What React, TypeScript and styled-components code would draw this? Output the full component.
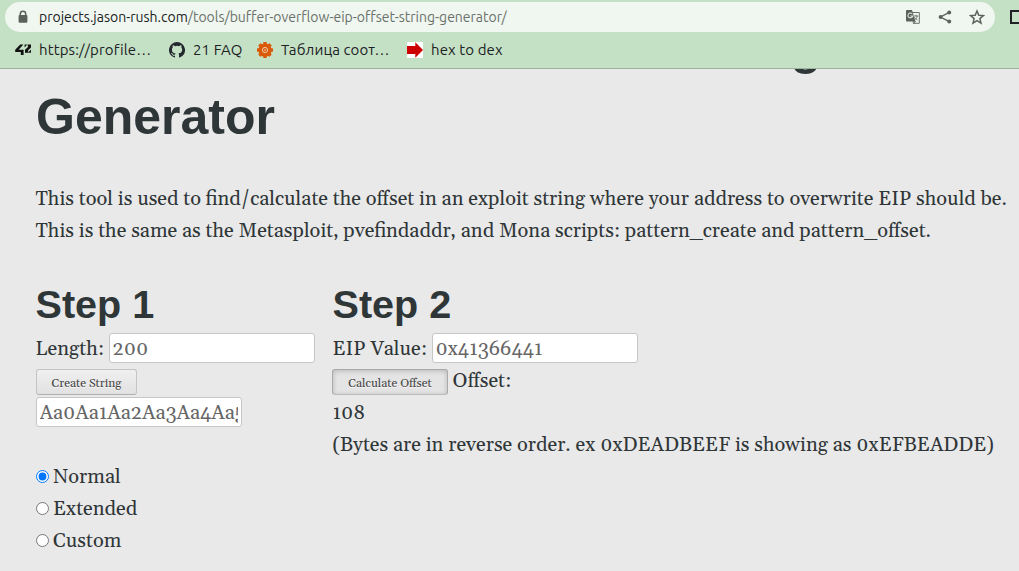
import React from "react";
import styled, { createGlobalStyle } from "styled-components";

const GlobalStyle = createGlobalStyle`
  * { box-sizing: border-box; }
  body { margin: 0; background: #e9e9e9; overflow: hidden; }
`;

const Window = styled.div`
  display: flex;
  flex-direction: column;
  width: 1019px;
  height: 571px;
  overflow: hidden;
  background: #e9e9e9;
`;

const Toolbar = styled.header`
  flex: none;
  height: 69px;
  padding-top: 2px;
  background: #c5e1c5;
  border-bottom: 1px solid #9db59d;
  font-family: Ubuntu, "Noto Sans", sans-serif;
  color: #202124;
`;

const AddressRow = styled.div`
  display: flex;
  align-items: center;
  width: 1030px;
  padding-left: 5px;
`;

const AddressBar = styled.div`
  display: flex;
  align-items: center;
  width: 990px;
  height: 30px;
  padding: 0 10px 0 12px;
  border-radius: 15px;
  background: #f0f7f0;
`;

const Url = styled.div`
  flex: 1;
  margin-left: 10px;
  font-size: 14px;
  white-space: nowrap;
  color: #6a716b;
  span { color: #202124; }
`;

const Actions = styled.div`
  display: flex;
  align-items: center;
  gap: 16px;
  svg { display: block; }
`;

const SidePanelIcon = styled.div`
  width: 16px;
  height: 14px;
  margin-left: 15px;
  border: 2px solid #202124;
`;

const Bookmarks = styled.nav`
  display: flex;
  align-items: center;
  height: 35px;
  padding-left: 15px;
`;

const Bookmark = styled.div<{ $width: number }>`
  display: flex;
  flex: none;
  align-items: center;
  gap: 8px;
  width: ${(p) => p.$width}px;
  font-size: 15px;
  letter-spacing: 0.1px;
  white-space: nowrap;
  svg { flex: none; }
`;

const Page = styled.main`
  flex: 1;
  min-height: 0;
  overflow: hidden;
  padding-left: 36px;
  font: 20px/32px Georgia, Gelasio, "Liberation Serif", serif;
  color: #2f3638;
`;

const Title = styled.h1`
  width: 900px;
  margin: -57px 0 30px;
  font: bold 50px/70px "Liberation Sans", Arial, sans-serif;
  color: #2f3638;
`;

const Line = styled.div`
  display: flex;
  align-items: center;
  height: 32px;
  padding-top: 2px;
  text-indent: -0.5px;
  white-space: nowrap;
`;

const Steps = styled.div`
  display: grid;
  grid-template-columns: 297px 1fr;
  margin-top: 34px;
`;

const StepTitle = styled.h2`
  margin: 0 0 4px;
  font: bold 39.6px/48px "Liberation Sans", Arial, sans-serif;
  text-indent: -0.5px;
`;

const Field = styled.input`
  width: 206px;
  height: 30px;
  margin-top: -2px;
  padding: 1px 3px 0 2.5px;
  border: 1px solid #c6c6c6;
  border-radius: 3px;
  outline: none;
  background: #fff;
  font: inherit;
  color: #666;
`;

const Labelled = styled.label<{ $label: number }>`
  display: grid;
  grid-template-columns: ${(p) => p.$label}px 206px;
  align-items: center;
`;

const Button = styled.button<{ $width: number; $pressed?: boolean }>`
  width: ${(p) => p.$width}px;
  height: 26px;
  margin: 2px 5px 0 ${(p) => (p.$pressed ? -1 : 0)}px;
  padding: 3px 0 0;
  border: 1px solid ${(p) => (p.$pressed ? "#aaa" : "#c4c4c4")};
  border-bottom-color: ${(p) => (p.$pressed ? "#bbb" : "#b0b0b0")};
  border-radius: 3px;
  background: ${(p) => (p.$pressed ? "#e4e4e4" : "linear-gradient(#f0f0f0, #e1e1e1)")};
  box-shadow: ${(p) => (p.$pressed ? "inset 0 1px 5px rgba(0,0,0,.2)" : "none")};
  font: 12px/17px Georgia, Gelasio, "Liberation Serif", serif;
  color: #444;
  text-shadow: 0 1px 0 rgba(255, 255, 255, 0.8);
`;

const Radio = styled.input`
  width: 13px;
  height: 13px;
  margin: -1px 4.5px 0 0;
`;

const Lock = () => (
  <svg width="12" height="14" viewBox="0 0 12 14">
    <path d="M3.3 6V4a2.7 2.7 0 0 1 5.4 0v2" fill="none" stroke="#5b615d" strokeWidth="1.5" />
    <rect x="1.6" y="5" width="8.8" height="7.8" rx="1" fill="#5b615d" />
  </svg>
);

const Translate = () => (
  <svg width="16" height="16" viewBox="0 0 16 16">
    <path d="M6.5 3.5h7.8v10.8H8.5" fill="none" stroke="#686e69" />
    <path d="M2 1h5l3.5 11.5H2a1 1 0 0 1-1-1V2a1 1 0 0 1 1-1Z" fill="#5b615d" />
    <path d="M7.2 4.9A2.4 2.4 0 1 0 7.7 7H5.4" fill="none" stroke="#e1e8e1" strokeWidth="1.1" />
    <path d="M8.8 7h4.5M11 5.8V7m1.2 0c-.3 2-1.4 3-2.8 4m.3-2.7c.6 1.3 1.5 2.1 2.8 2.8M8 12.5h2.5l-2 2.2Z" fill="none" stroke="#686e69" strokeWidth=".9" />
  </svg>
);

const Share = () => (
  <svg width="16" height="16" viewBox="0 0 16 16" fill="#5b615d">
    <path d="m12.3 3.4-8.8 4.6 8.8 4.6" fill="none" stroke="#5b615d" strokeWidth="1.4" />
    <circle cx="12.2" cy="3.5" r="2" />
    <circle cx="3.6" cy="8" r="2" />
    <circle cx="12.2" cy="12.5" r="2" />
  </svg>
);

const Star = () => (
  <svg width="16" height="16" viewBox="0 0 16 16">
    <path d="m8 2 1.8 4.2 4.6.4-3.5 3 1.1 4.5L8 11.7l-4 2.4 1.1-4.5-3.5-3 4.6-.4Z" fill="none" stroke="#5b615d" strokeWidth="1.5" />
  </svg>
);

const FortyTwo = () => (
  <svg width="16" height="16" viewBox="0 0 16 16" fill="#111">
    <path d="M5.2 2.5h3.2L3.6 7.8h5v5.2H5.8V10H.2V7.8Z" />
    <path d="M9.6 2.5h2.6L9.6 5.4ZM12.5 2.5H16v3L13.2 8.3v2.5H10V7.8l3-2.8ZM16 7.5v3.3h-3Z" />
  </svg>
);

const Github = () => (
  <svg width="16" height="16" viewBox="0 0 16 16" fill="#24292f">
    <path d="M8 0a8 8 0 0 0-2.53 15.59c.4.07.55-.17.55-.38v-1.49c-2.01.37-2.53-.49-2.69-.94-.09-.23-.48-.94-.82-1.13-.28-.15-.68-.52-.01-.53.63-.01 1.08.58 1.23.82.72 1.21 1.87.87 2.33.66.07-.52.28-.87.51-1.07-1.78-.2-3.64-.89-3.64-3.95 0-.87.31-1.59.82-2.15-.08-.2-.36-1.02.08-2.12 0 0 .67-.21 2.2.82a7.6 7.6 0 0 1 4 0c1.53-1.04 2.2-.82 2.2-.82.44 1.1.16 1.92.08 2.12.51.56.82 1.27.82 2.15 0 3.07-1.87 3.75-3.65 3.95.29.25.54.73.54 1.48v2.2c0 .21.15.46.55.38A8 8 0 0 0 8 0Z" />
  </svg>
);

const teeth = [0, 45, 90, 135, 180, 225, 270, 315];

const Gear = () => (
  <svg width="16" height="16" viewBox="0 0 16 16">
    <g fill="#d95b0a">
      <circle cx="8" cy="8" r="6.6" />
      {teeth.map((a) => (
        <rect key={a} x="6.2" y="0" width="3.6" height="4" rx=".6" transform={`rotate(${a} 8 8)`} />
      ))}
    </g>
    <circle cx="8" cy="8" r="2.6" fill="none" stroke="#f5d3ba" strokeWidth=".9" />
    <circle cx="8" cy="8" r=".8" fill="#f5d3ba" />
  </svg>
);

const RedArrow = () => (
  <svg width="16" height="16" viewBox="0 0 16 16">
    <path fill="#fff" d="M0 0h16v16H0z" />
    <path fill="#c00" d="M0 4h8.3V.3L16 8l-7.7 7.7V12H0Z" />
  </svg>
);

const modes = ["Normal", "Extended", "Custom"];

export default function App() {
  return (
    <Window>
      <GlobalStyle />
      <Toolbar>
        <AddressRow>
          <AddressBar>
            <Lock />
            <Url>
              <span>projects.jason-rush.com</span>/tools/buffer-overflow-eip-offset-string-generator/
            </Url>
            <Actions>
              <Translate />
              <Share />
              <Star />
            </Actions>
          </AddressBar>
          <SidePanelIcon />
        </AddressRow>
        <Bookmarks>
          <Bookmark $width={154}><FortyTwo />https://profile…</Bookmark>
          <Bookmark $width={88}><Github />21 FAQ</Bookmark>
          <Bookmark $width={150}><Gear />Таблица соот…</Bookmark>
          <Bookmark $width={110}><RedArrow />hex to dex</Bookmark>
        </Bookmarks>
      </Toolbar>
      <Page>
        <Title>Buffer Overflow EIP Offset String Generator</Title>
        <Line>
          This tool is used to find/calculate the offset in an exploit string where your address to overwrite EIP should be.
        </Line>
        <Line>
          This is the same as the Metasploit, pvefindaddr, and Mona scripts: pattern_create and pattern_offset.
        </Line>
        <Steps>
          <section>
            <StepTitle>Step 1</StepTitle>
            <Line>
              <Labelled $label={73}>Length:<Field defaultValue="200" /></Labelled>
            </Line>
            <Line><Button $width={101}>Create String</Button></Line>
            <Line><Field defaultValue="Aa0Aa1Aa2Aa3Aa4Aa5Aa6Aa7Aa8Aa9" /></Line>
            <Line />
            {modes.map((mode) => (
              <Line as="label" key={mode}>
                <Radio type="radio" name="mode" defaultChecked={mode === "Normal"} />
                {mode}
              </Line>
            ))}
          </section>
          <section>
            <StepTitle>Step 2</StepTitle>
            <Line>
              <Labelled $label={99}>EIP Value:<Field defaultValue="0x41366441" /></Labelled>
            </Line>
            <Line><Button $width={116} $pressed>Calculate Offset</Button>Offset:</Line>
            <Line>108</Line>
            <Line>(Bytes are in reverse order. ex 0xDEADBEEF is showing as 0xEFBEADDE)</Line>
          </section>
        </Steps>
      </Page>
    </Window>
  );
}
